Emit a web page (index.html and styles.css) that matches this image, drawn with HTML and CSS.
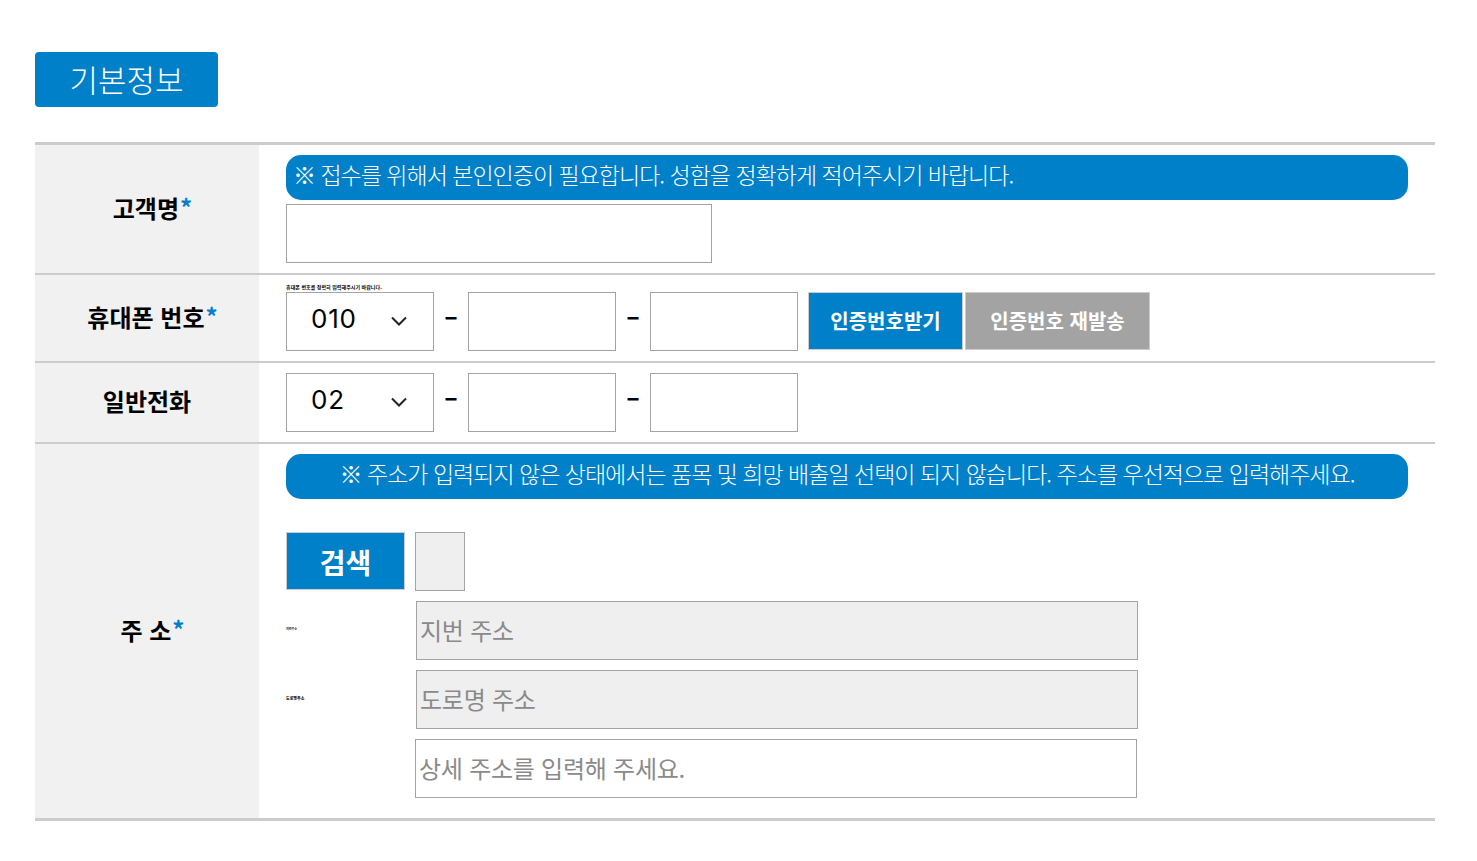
FILE: index.html
```html
<!DOCTYPE html>
<html lang="ko">
<head>
    <meta charset="UTF-8">
    <title>기본정보</title>
    <link rel="stylesheet" href="styles.css">
</head>
<body>
    <div class="wrap">
        <h2 class="title">기본정보</h2>

        <div class="form">
            <!-- 고객명 -->
            <div class="row row-name">
                <div class="label">고객명<span class="req">*</span></div>
                <div class="cell">
                    <p class="notice notice-left">※ 접수를 위해서 본인인증이 필요합니다. 성함을 정확하게 적어주시기 바랍니다.</p>
                    <input class="field field-name" type="text">
                </div>
            </div>

            <!-- 휴대폰 번호 -->
            <div class="row row-phone">
                <div class="label">휴대폰 번호<span class="req">*</span></div>
                <div class="cell">
                    <span class="tiny">휴대폰 번호를 정확히 입력해주시기 바랍니다.</span>
                    <div class="tel">
                        <div class="select"><span>010</span><svg class="chev" viewBox="0 0 16 10"><path d="M1 1.5l7 7 7-7"/></svg></div>
                        <span class="dash">–</span>
                        <input class="field field-tel" type="text">
                        <span class="dash">–</span>
                        <input class="field field-tel" type="text">
                        <button class="btn btn-auth" type="button">인증번호받기</button>
                        <button class="btn btn-resend" type="button">인증번호 재발송</button>
                    </div>
                </div>
            </div>

            <!-- 일반전화 -->
            <div class="row row-home">
                <div class="label">일반전화</div>
                <div class="cell">
                    <div class="tel">
                        <div class="select"><span>02</span><svg class="chev" viewBox="0 0 16 10"><path d="M1 1.5l7 7 7-7"/></svg></div>
                        <span class="dash">–</span>
                        <input class="field field-tel" type="text">
                        <span class="dash">–</span>
                        <input class="field field-tel" type="text">
                    </div>
                </div>
            </div>

            <!-- 주소 -->
            <div class="row row-addr">
                <div class="label">주 소<span class="req">*</span></div>
                <div class="cell">
                    <p class="notice notice-center">※ 주소가 입력되지 않은 상태에서는 품목 및 희망 배출일 선택이 되지 않습니다. 주소를 우선적으로 입력해주세요.</p>
                    <div class="search">
                        <button class="btn btn-search" type="button">검색</button>
                        <input class="field field-zip" type="text" readonly>
                    </div>
                    <div class="addr-line">
                        <span class="tiny-addr tiny-jibun">지번주소</span>
                        <input class="field field-addr readonly" type="text" placeholder="지번 주소" readonly>
                    </div>
                    <div class="addr-line">
                        <span class="tiny-addr tiny-road">도로명주소</span>
                        <input class="field field-addr readonly" type="text" placeholder="도로명 주소" readonly>
                    </div>
                    <div class="addr-line addr-detail">
                        <input class="field field-addr" type="text" placeholder="상세 주소를 입력해 주세요.">
                    </div>
                </div>
            </div>
        </div>
    </div>
</body>
</html>
```

FILE: styles.css
```css
/* 전체 */
* {
    box-sizing: border-box;
}

body {
    margin: 0;
    background: #fff;
    font-family: "Noto Sans CJK KR", "Noto Sans", sans-serif;
    color: #000;
}

.wrap {
    width: 1400px;
    margin-left: 35px;
    padding-top: 52px;
}

/* 제목 */
.title {
    width: 183px;
    height: 55px;
    margin: 0 0 35px;
    background: #0080c9;
    border-radius: 4px;
    color: #fff;
    font-size: 31px;
    font-weight: 300;
    line-height: 53px;
    text-align: center;
}

/* 폼 */
.form {
    border-top: 3px solid #ccc;
    border-bottom: 3px solid #ccc;
}

.row {
    display: grid;
    grid-template-columns: 224px 1fr;
    border-bottom: 2px solid #ccc;
}

.row:last-child {
    border-bottom: 0;
}

.row-name { height: 130px; }
.row-phone { height: 88px; }
.row-home { height: 81px; }
.row-addr { height: 374px; }

.label {
    display: flex;
    justify-content: center;
    align-items: center;
    padding-bottom: 4px;
    background: #f1f1f1;
    font-size: 24px;
    font-weight: 700;
}

.req {
    color: #0080c9;
    margin: -2px -11px 0 1px;
}

.cell {
    padding: 10px 27px 0;
}

/* 안내문 */
.notice {
    height: 45px;
    margin: 0;
    background: #0080c9;
    border-radius: 15px;
    color: #fff;
    font-size: 23px;
    font-weight: 300;
    letter-spacing: -1px;
    line-height: 39px;
    white-space: nowrap;
}

.notice-left {
    padding-left: 7px;
}

.notice-center {
    text-align: center;
}

/* 입력칸 */
.field {
    display: block;
    height: 59px;
    border: 1px solid #a3a3a3;
    border-radius: 0;
    background: #fff;
    padding: 0 3px 2px;
    font-family: inherit;
    font-size: 24px;
    letter-spacing: -0.25px;
    outline: none;
}

.field::placeholder {
    color: #8a8a8a;
    opacity: 1;
}

.field-name {
    width: 426px;
    margin-top: 4px;
}

.field-tel {
    width: 148px;
}

.tiny {
    display: block;
    height: 7px;
    margin-top: -2px;
    margin-bottom: 2px;
    font-size: 5px;
    font-weight: 700;
    letter-spacing: 0.05px;
    line-height: 7px;
    white-space: nowrap;
}

.tel {
    display: flex;
    align-items: flex-start;
}

.select {
    display: flex;
    align-items: center;
    justify-content: space-between;
    width: 148px;
    height: 59px;
    padding: 0 26px 0 24px;
    border: 1px solid #a3a3a3;
    font-family: "Inter", sans-serif;
    font-size: 26px;
    letter-spacing: 0.8px;
    line-height: 1;
}

.select span {
    margin-bottom: 6px;
}

.chev {
    width: 16px;
    height: 10px;
    margin-top: -1px;
}

.chev path {
    fill: none;
    stroke: #222;
    stroke-width: 2;
}

.dash {
    width: 34px;
    height: 52px;
    text-align: center;
    font-family: "Inter", sans-serif;
    font-size: 22px;
    font-weight: 700;
    line-height: 50px;
}

/* 버튼 */
.btn {
    display: block;
    height: 58px;
    padding: 0 0 1px;
    border: 1px solid #ccc;
    color: #fff;
    font-family: inherit;
    font-weight: 700;
}

.btn-auth {
    width: 155px;
    margin-left: 10px;
    background: #0080c9;
    font-size: 20px;
}

.btn-resend {
    width: 185px;
    margin-left: 2px;
    background: #a3a3a3;
    font-size: 20px;
}

.search {
    display: flex;
    gap: 10px;
    margin-top: 33px;
}

.btn-search {
    width: 119px;
    padding: 1px 0 0;
    background: #0080c9;
    font-size: 28px;
}

.field-zip {
    width: 50px;
    background: #efefef;
}

/* 주소 */
.addr-line {
    display: flex;
    align-items: center;
    margin-top: 10px;
}

.tiny-addr {
    width: 130px;
    margin-top: -4px;
    font-size: 3px;
    font-weight: 700;
    white-space: nowrap;
}

.tiny-road {
    font-size: 4px;
}

.field-addr {
    width: 722px;
}

.readonly {
    background: #efefef;
}

.addr-detail {
    padding-left: 129px;
}
```
